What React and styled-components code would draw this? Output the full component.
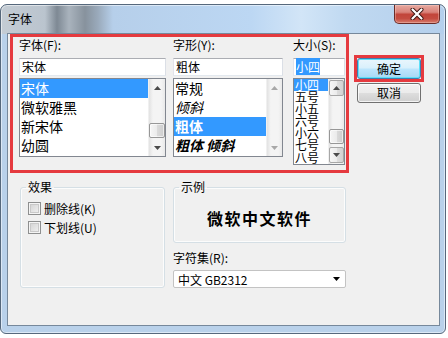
import React from 'react';
import styled, { createGlobalStyle, css } from 'styled-components';

const GlobalStyle = createGlobalStyle`
  html, body {
    margin: 0;
    padding: 0;
    background: #ffffff;
  }
  body {
    width: 448px;
    height: 338px;
    overflow: hidden;
    font-family: "Noto Sans CJK SC", "Noto Sans", sans-serif;
    font-size: 12px;
    color: #000;
  }
  * {
    box-sizing: border-box;
  }
`;

const Page = styled.div`
  padding-top: 4px;
`;

const Window = styled.div`
  width: 446px;
  height: 330px;
  border: 1px solid #56687c;
  border-radius: 7px 7px 6px 6px;
  background:
    linear-gradient(
        to right,
        #c4ccd4 0px,
        #bac4ce 44px,
        #7e8994 56px,
        #a9b3bd 68px,
        #87929d 84px,
        #9aaabb 97px,
        #b6cfea 112px,
        #bcd7f3 250px,
        #d2e5f7 300px,
        #c0d9f1 345px,
        #b4cfec 446px
      )
      top / 100% 29px no-repeat,
    #b9d1ea;
  box-shadow: inset 0 0 0 1px rgba(255, 255, 255, 0.5);
  display: flex;
  flex-direction: column;
`;

const TitleBar = styled.div`
  height: 28px;
  display: flex;
  align-items: center;
  padding-left: 7px;
`;

const Title = styled.span`
  font-size: 12px;
  line-height: 14px;
`;

const CloseButton = styled.div`
  margin-left: auto;
  margin-right: 5px;
  align-self: flex-start;
  width: 46px;
  height: 19px;
  border: 1px solid #6b2b27;
  border-top: none;
  border-radius: 0 0 5px 5px;
  background: linear-gradient(#e7a89f 0%, #d9837a 40%, #c2453a 52%, #c44c40 75%, #d77b6c 100%);
  box-shadow: inset 0 0 0 1px rgba(255, 220, 210, 0.35);
  display: flex;
  align-items: center;
  justify-content: center;
`;

const Body = styled.div`
  flex: 1;
  padding: 0 5px 7px 6px;
  display: flex;
`;

const Client = styled.div`
  flex: 1;
  border: 1px solid #76889b;
  background: #f0f0f0;
  display: flex;
  flex-direction: column;
`;

const TopRow = styled.div`
  display: flex;
  align-items: flex-start;
`;

const RedFrame = styled.div`
  margin-left: 2px;
  width: 339px;
  height: 139px;
  border: 3px solid #e53a3f;
  padding: 1px 0 0 6px;
  display: flex;
`;

const Column = styled.div`
  display: flex;
  flex-direction: column;
  width: ${(p) => p.$w}px;
  margin-left: ${(p) => p.$ml || 0}px;
`;

const Label = styled.div`
  height: 14px;
  line-height: 14px;
  font-size: 12px;
  white-space: nowrap;
`;

const TextBox = styled.div`
  margin-top: 6px;
  height: 18px;
  border: 1px solid;
  border-color: #abadb3 #dbdfe6 #e3e9ef #e2e3ea;
  background: #fff;
  font-size: 12px;
  line-height: 16px;
  padding-left: 2px;
  white-space: nowrap;
`;

const Selected = styled.span`
  background: #3399ff;
  color: #fff;
`;

const ListBox = styled.div`
  margin-top: 2px;
  height: ${(p) => p.$h}px;
  border: 1px solid #828790;
  background: #fff;
  display: flex;
`;

const Items = styled.div`
  flex: 1;
  display: flex;
  flex-direction: column;
  overflow: hidden;
`;

const Item = styled.div`
  flex: none;
  height: ${(p) => p.$h}px;
  line-height: ${(p) => p.$h}px;
  font-size: ${(p) => p.$fs || 14}px;
  padding-left: 1px;
  white-space: nowrap;
  font-style: ${(p) => (p.$italic ? 'italic' : 'normal')};
  font-weight: ${(p) => (p.$bold ? 700 : 400)};
  ${(p) =>
    p.$selected &&
    css`
      background: #3399ff;
      color: #fff;
    `}
`;

const Scroll = styled.div`
  width: ${(p) => p.$w}px;
  display: flex;
  flex-direction: column;
  background: linear-gradient(to right, #e2e2e2, #f4f4f4 25%, #f4f4f4 75%, #e9e9e9);
  border-left: 1px solid #f0f0f0;
`;

const ArrowButton = styled.div`
  flex: none;
  height: 17px;
  display: flex;
  align-items: center;
  justify-content: center;
  ${(p) =>
    p.$boxed &&
    css`
      height: 16px;
      margin: ${p.$down ? '0 0 1px' : '1px 0 0'};
      border: 1px solid #a7a7a7;
      border-radius: 2px;
      background: linear-gradient(to right, #f6f6f6, #ececec 50%, #dedede 50%, #d2d2d2);
    `}
`;

const Track = styled.div`
  flex: 1;
`;

const Thumb = styled.div`
  height: 15px;
  border: 1px solid #979797;
  border-radius: 2px;
  background: linear-gradient(to right, #f6f6f6, #ebebeb 50%, #dbdbdb 50%, #cdcdcd);
  box-shadow: inset 0 0 0 1px rgba(255, 255, 255, 0.6);
`;

const ButtonColumn = styled.div`
  margin-left: 5px;
  margin-top: 21px;
  display: flex;
  flex-direction: column;
`;

const DefaultFrame = styled.div`
  width: 70px;
  height: 27px;
  border: 3px solid #e53a3f;
`;

const Button = styled.div`
  width: 64px;
  height: ${(p) => (p.$default ? 21 : 20)}px;
  margin: ${(p) => (p.$default ? '0' : '1px 0 0 3px')};
  border: 1px solid ${(p) => (p.$default ? '#3c7fb1' : '#707070')};
  border-radius: 3px;
  background: ${(p) =>
    p.$default
      ? 'linear-gradient(#eaf6fd 0%, #d9f0fc 48%, #bee6fd 52%, #a7d9f5 100%)'
      : 'linear-gradient(#f2f2f2 0%, #ebebeb 48%, #dddddd 52%, #cfcfcf 100%)'};
  box-shadow: inset 0 0 0 1px ${(p) => (p.$default ? '#5ee0f8' : 'rgba(255,255,255,0.75)')};
  display: flex;
  align-items: center;
  justify-content: center;
  font-size: 12px;
  line-height: 14px;
`;

const BottomRow = styled.div`
  display: flex;
  align-items: flex-start;
  margin-top: 7px;
`;

const Group = styled.fieldset`
  margin: 0 0 0 ${(p) => p.$ml}px;
  width: ${(p) => p.$w}px;
  height: ${(p) => p.$h}px;
  padding: 0 5px;
  border: 1px solid #d5dfe5;
  border-radius: 3px;
  box-shadow: inset 0 0 0 1px rgba(255, 255, 255, 0.8);
  min-width: 0;
`;

const Legend = styled.legend`
  padding: 0 2px;
  font-size: 12px;
  line-height: 14px;
`;

const CheckList = styled.div`
  padding: 5px 0 0 2px;
  display: flex;
  flex-direction: column;
`;

const CheckRow = styled.div`
  height: 19px;
  display: flex;
  align-items: center;
  gap: 3px;
  white-space: nowrap;
`;

const CheckBox = styled.span`
  width: 13px;
  height: 13px;
  border: 1px solid #8e8f8f;
  background: linear-gradient(135deg, #d0d0d0, #f4f4f4);
  box-shadow: inset 0 0 0 1px #f4f4f4, inset 0 0 0 2px #c9c9c9;
`;

const SampleColumn = styled.div`
  margin-left: 8px;
  width: 173px;
  display: flex;
  flex-direction: column;
`;

const SampleArea = styled.div`
  height: 48px;
  display: flex;
  align-items: center;
  justify-content: center;
  font-size: 16px;
  font-weight: 700;
  letter-spacing: 1.5px;
`;

const CharsetLabel = styled(Label)`
  margin-top: 8px;
`;

const Combo = styled.div`
  margin-top: 5px;
  height: 18px;
  border: 1px solid #c3c3c3;
  border-radius: 2px;
  background: #fff;
  display: flex;
  align-items: center;
  padding: 0 5px 0 4px;
  font-size: 12px;
`;

const ComboText = styled.span`
  flex: 1;
  white-space: nowrap;
`;

function Arrow({ down, color }) {
  return (
    <svg width="7" height="4" viewBox="0 0 7 4">
      <polygon points={down ? '0,0 7,0 3.5,4' : '0,4 7,4 3.5,0'} fill={color} />
    </svg>
  );
}

function ScrollBar({ width = 17, thumbTop, disabled, boxed }) {
  const color = disabled ? '#a8a8a8' : '#4a4a4a';
  return (
    <Scroll $w={width}>
      <ArrowButton $boxed={boxed}>
        <Arrow color={color} />
      </ArrowButton>
      <Track>{thumbTop != null && <Thumb style={{ marginTop: thumbTop }} />}</Track>
      <ArrowButton $boxed={boxed} $down>
        <Arrow down color={color} />
      </ArrowButton>
    </Scroll>
  );
}

const fonts = ['宋体', '微软雅黑', '新宋体', '幼圆'];
const styles = [
  { name: '常规' },
  { name: '倾斜', italic: true },
  { name: '粗体', bold: true, selected: true },
  { name: '粗体 倾斜', bold: true, italic: true },
];
const sizes = ['小四', '五号', '小五', '六号', '小六', '七号', '八号'];

export default function App() {
  return (
    <Page>
      <GlobalStyle />
      <Window>
        <TitleBar>
          <Title>字体</Title>
          <CloseButton>
            <svg width="14" height="12" viewBox="0 0 14 12">
              <path d="M2.5 1.5 L11.5 10.5 M11.5 1.5 L2.5 10.5" stroke="#3b1410" strokeWidth="4" strokeLinecap="round" />
              <path d="M2.5 1.5 L11.5 10.5 M11.5 1.5 L2.5 10.5" stroke="#ffffff" strokeWidth="2.2" strokeLinecap="round" />
            </svg>
          </CloseButton>
        </TitleBar>
        <Body>
          <Client>
            <TopRow>
              <RedFrame>
                <Column $w={147}>
                  <Label>字体(F):</Label>
                  <TextBox>宋体</TextBox>
                  <ListBox $h={79}>
                    <Items>
                      {fonts.map((f, i) => (
                        <Item key={f} $h={19} $selected={i === 0}>
                          {f}
                        </Item>
                      ))}
                    </Items>
                    <ScrollBar thumbTop={27} />
                  </ListBox>
                </Column>
                <Column $w={110} $ml={7}>
                  <Label>字形(Y):</Label>
                  <TextBox>粗体</TextBox>
                  <ListBox $h={79}>
                    <Items>
                      {styles.map((s) => (
                        <Item key={s.name} $h={19} $bold={s.bold} $italic={s.italic} $selected={s.selected}>
                          {s.name}
                        </Item>
                      ))}
                    </Items>
                    <ScrollBar width={16} disabled />
                  </ListBox>
                </Column>
                <Column $w={52} $ml={10}>
                  <Label>大小(S):</Label>
                  <TextBox>
                    <Selected>小四</Selected>
                  </TextBox>
                  <ListBox $h={87}>
                    <Items>
                      {sizes.map((s, i) => (
                        <Item key={s} $h={12.1} $fs={12} $selected={i === 0}>
                          {s}
                        </Item>
                      ))}
                    </Items>
                    <ScrollBar width={16} thumbTop={33} boxed />
                  </ListBox>
                </Column>
              </RedFrame>
              <ButtonColumn>
                <DefaultFrame>
                  <Button $default>确定</Button>
                </DefaultFrame>
                <Button>取消</Button>
              </ButtonColumn>
            </TopRow>
            <BottomRow>
              <Group $ml={12} $w={145} $h={108}>
                <Legend>效果</Legend>
                <CheckList>
                  <CheckRow>
                    <CheckBox />
                    删除线(K)
                  </CheckRow>
                  <CheckRow>
                    <CheckBox />
                    下划线(U)
                  </CheckRow>
                </CheckList>
              </Group>
              <SampleColumn>
                <Group $ml={0} $w={173} $h={63}>
                  <Legend>示例</Legend>
                  <SampleArea>微软中文软件</SampleArea>
                </Group>
                <CharsetLabel>字符集(R):</CharsetLabel>
                <Combo>
                  <ComboText>中文 GB2312</ComboText>
                  <Arrow down color="#000" />
                </Combo>
              </SampleColumn>
            </BottomRow>
          </Client>
        </Body>
      </Window>
    </Page>
  );
}
